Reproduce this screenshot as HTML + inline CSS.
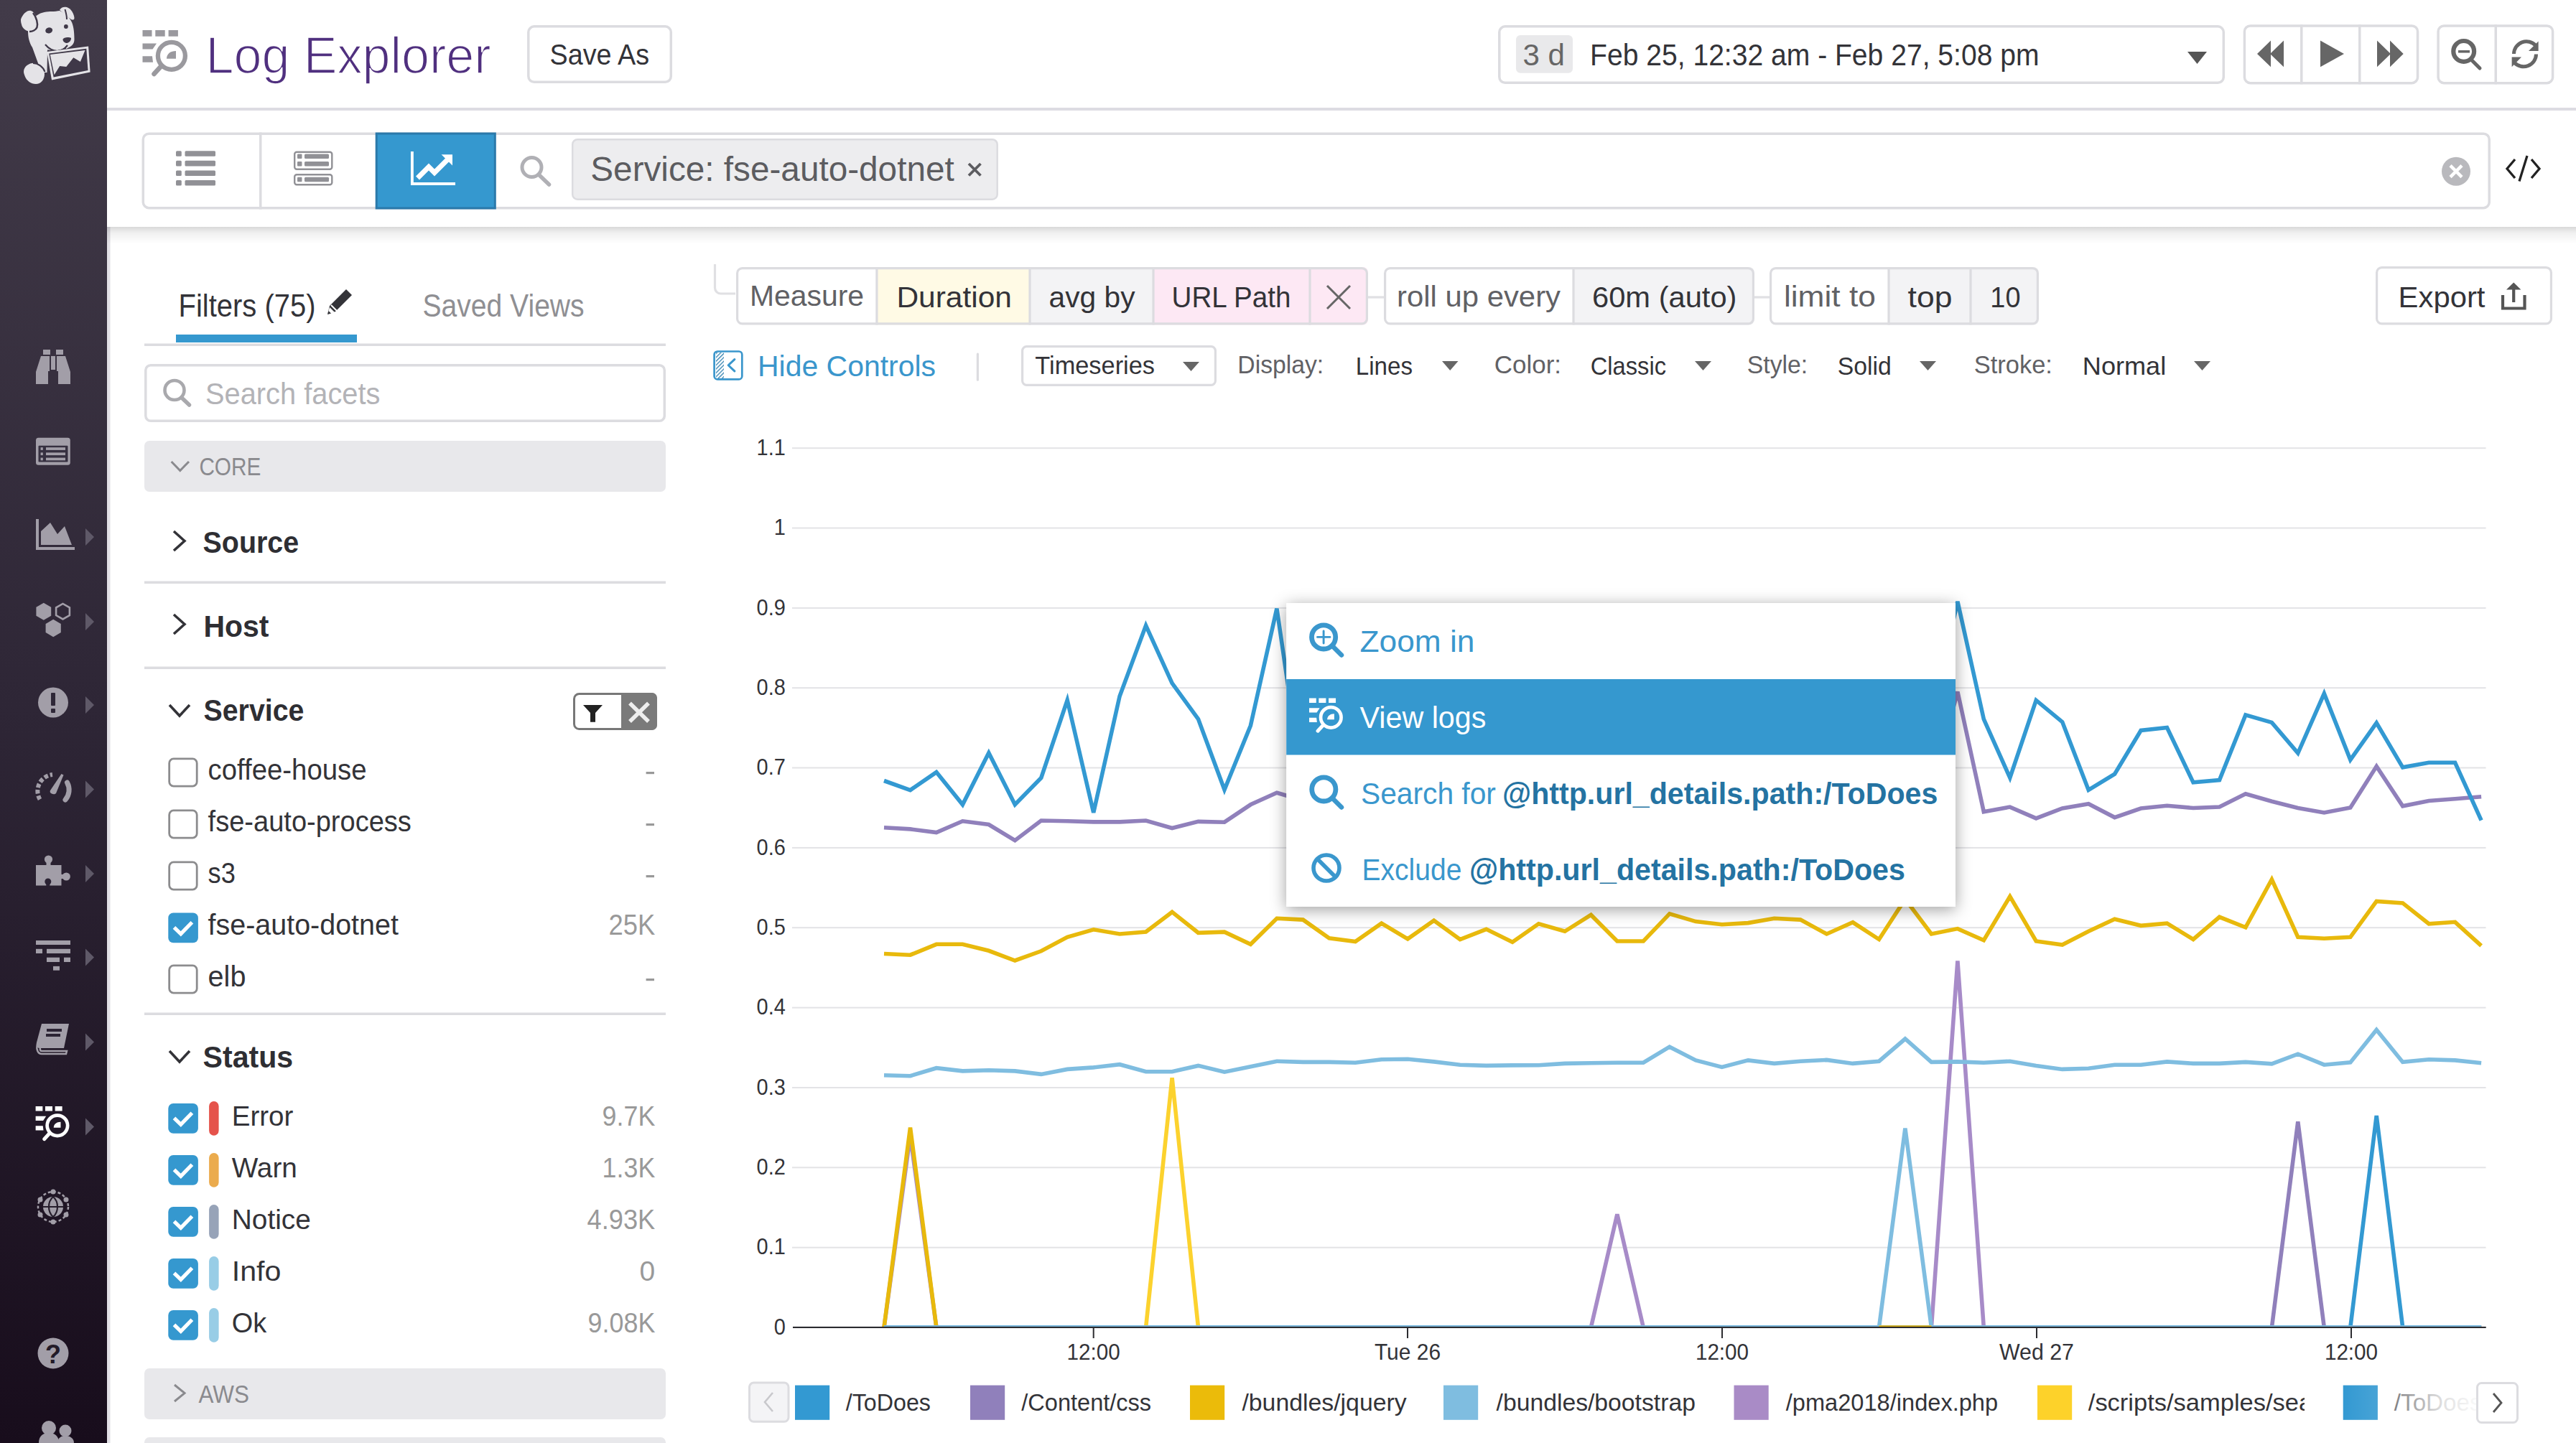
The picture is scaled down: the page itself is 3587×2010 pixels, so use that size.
<!DOCTYPE html><html><head><meta charset="utf-8"><style>html,body{margin:0;padding:0;background:#fff;overflow:hidden;width:3587px;height:2010px}svg{display:block;font-family:"Liberation Sans",sans-serif}</style></head><body>
<svg width="3587" height="2010" viewBox="0 0 3587 2010">
<defs>
<linearGradient id="sb" x1="0" y1="0" x2="0" y2="1"><stop offset="0" stop-color="#423b49"/><stop offset="0.49" stop-color="#2e2636"/><stop offset="1" stop-color="#180d1c"/></linearGradient>
<linearGradient id="tbs" x1="0" y1="0" x2="0" y2="1"><stop offset="0" stop-color="#000" stop-opacity="0.15"/><stop offset="0.35" stop-color="#000" stop-opacity="0.06"/><stop offset="1" stop-color="#000" stop-opacity="0"/></linearGradient>
<linearGradient id="fade" x1="0" y1="0" x2="1" y2="0"><stop offset="0" stop-color="#fff" stop-opacity="0"/><stop offset="0.26" stop-color="#fff" stop-opacity="0.1"/><stop offset="0.4" stop-color="#fff" stop-opacity="0.4"/><stop offset="0.75" stop-color="#fff" stop-opacity="0.85"/><stop offset="1" stop-color="#fff" stop-opacity="0.97"/></linearGradient>
<filter id="shadow" x="-10%" y="-15%" width="120%" height="135%"><feDropShadow dx="0" dy="4" stdDeviation="11" flood-color="#000" flood-opacity="0.38"/></filter>
<pattern id="hatch" width="3.8" height="3.8" patternUnits="userSpaceOnUse" patternTransform="rotate(45)"><rect width="1.3" height="3.8" fill="#2f7fae"/></pattern>
</defs>
<rect width="3587" height="2010" fill="#fff"/>
<rect x="0" y="0" width="149" height="2010" fill="url(#sb)"/>
<rect x="149.0" y="316.0" width="4.5" height="1694.0" rx="0.0" fill="#e2e0e6"/>
<g fill="#e4e3e7">
<path d="M39,44 C38,35 44,25 52,21 C57,17 66,16 72,16 C76,16 80,15.5 83,15 C90,18 97,24 100,31 C103,38 103.5,48 103.5,55 C103.5,61 100,64 96,66 L91.5,68.5 C85,71 75,72 67,71 L66,72 L65.5,101 L54,101 L53,88 C50,80 48,74 45,66 C41,60 39,52 39,44 Z"/>
<path d="M83,14 C85,10 89,9 93,10 C99,12 103,19 103.5,25 C103.5,28 101,28 99,27 C95,24 89,19 83,14 Z"/>
<path d="M29,27 C32,19 38,14 43,15 C48,16 53,26 53,35 C53,41 49,44 44,44 C37,44 31,40 30,34 C29,31 29,29 29,27 Z"/>
<path d="M33,100 C33,92 42,87 49,88 C56,89 62,95 62,103 C62,111 57,117 50,117 C43,117 37,112 35,107 C34,104 33,102 33,100 Z"/>
</g>
<path d="M46,18 C51,24 53,33 51.5,38 C50,42 45,44 41,44" fill="none" stroke="#3f3848" stroke-width="2.5"/>
<path d="M90.5,13 C92,18 93,23 93,27" fill="none" stroke="#3f3848" stroke-width="2.0"/>
<path d="M46,88 C53,88 60,93 62.5,100" fill="none" stroke="#3f3848" stroke-width="2.2"/>
<g fill="#3f3848">
<ellipse cx="68.2" cy="42.4" rx="5" ry="4.1" transform="rotate(-15 68.2 42.4)"/>
<ellipse cx="91.9" cy="37" rx="2.9" ry="2.9"/>
<path d="M87.5,55 C88,52 96,51 99,53 C99.5,56 96,60 93,60 C90,60 87.5,57.5 87.5,55 Z"/>
</g>
<path d="M63,62 C68,68 74,71 80,71 C86,71 91,67 94,63" fill="none" stroke="#3f3848" stroke-width="2.2"/>
<path d="M66,70.8 C75,72.5 84,72 92,67.5" fill="none" stroke="#3f3848" stroke-width="3.0"/>
<path d="M65.3,71.9 L123.1,64.4 L125.6,100.6 L72,111.4 Z" fill="#e4e3e7"/>
<path d="M68.2,74.6 L120.3,67.8 L122.5,98 L74.6,107.5 Z" fill="#3f3848"/>
<path d="M69.8,76 L118.5,70 L111.9,86 L102.3,80.2 L92.3,93.1 L83.2,91.9 L75.6,104.2 Z" fill="#e4e3e7"/>
<g fill="#a29ea8">
<path d="M60,487 L70,487 L70,494 L60,494 Z M78,487 L88,487 L88,494 L78,494 Z"/>
<path d="M57,496 L69,496 L69,517 L67,517 L67,535 L50,535 L50,518 Z M71,496 L77,496 L77,515 L71,515 Z M79,496 L91,496 L98,518 L98,535 L81,535 L81,517 L79,517 Z"/>
</g>
<rect x="50.0" y="609.7" width="47.8" height="38.0" rx="3.5" fill="#a29ea8"/>
<rect x="53.5" y="620.7" width="41.0" height="22.9" rx="1.0" fill="#363040"/>
<rect x="56.6" y="623.2" width="3.2" height="3.7" rx="0.0" fill="#a29ea8"/>
<rect x="64.0" y="623.2" width="27.0" height="3.7" rx="0.0" fill="#a29ea8"/>
<rect x="56.6" y="630.4" width="3.2" height="3.7" rx="0.0" fill="#a29ea8"/>
<rect x="64.0" y="630.4" width="27.0" height="3.7" rx="0.0" fill="#a29ea8"/>
<rect x="56.6" y="637.6" width="3.2" height="3.7" rx="0.0" fill="#a29ea8"/>
<rect x="64.0" y="637.6" width="27.0" height="3.7" rx="0.0" fill="#a29ea8"/>
<path d="M50,723 L50,766 L104,766 L104,762 L54,762 L54,723 Z" fill="#a29ea8"/>
<path d="M57,759 L57,740 L70,728 L80,744 L90,733 L100,759 Z" fill="#a29ea8"/>
<path d="M119,736.0 L131,748.0 L119,760.0 Z" fill="#5f5968"/>
<path d="M71.2,857.7 L60.8,863.7 L50.4,857.7 L50.4,845.7 L60.8,839.7 L71.2,845.7 Z" fill="#a29ea8"/>
<path d="M96.9,857.1 L87.5,862.5 L78.1,857.1 L78.1,846.3 L87.5,840.9 L96.9,846.3 Z" fill="none" stroke="#a29ea8" stroke-width="2.6"/>
<path d="M84.8,881.1 L74.2,887.2 L63.6,881.1 L63.6,868.9 L74.2,862.8 L84.8,868.9 Z" fill="#a29ea8"/>
<path d="M119,854.0 L131,866.0 L119,878.0 Z" fill="#5f5968"/>
<circle cx="74" cy="978.5" r="21" fill="#a29ea8"/>
<rect x="71.0" y="965.0" width="6.0" height="18.0" rx="1.0" fill="#2f2838"/>
<rect x="71.0" y="987.0" width="6.0" height="6.0" rx="1.0" fill="#2f2838"/>
<path d="M119,970.0 L131,982.0 L119,994.0 Z" fill="#5f5968"/>
<path d="M55.5,1113.5 A23,23 0 0 1 73,1079" fill="none" stroke="#a29ea8" stroke-width="6.0" stroke-dasharray="5.5 3"/>
<path d="M93.5,1090 A21,21 0 0 1 91,1114" fill="none" stroke="#a29ea8" stroke-width="7.0" stroke-linecap="round"/>
<path d="M70,1101 L85.5,1078 L88.5,1079.5 L78,1105 C75,1108 68,1105 70,1101 Z" fill="#a29ea8"/>
<path d="M119,1087.5 L131,1099.5 L119,1111.5 Z" fill="#5f5968"/>
<g fill="#a29ea8"><rect x="50" y="1205" width="35.5" height="28.5"/><circle cx="67.5" cy="1197" r="5.6"/><rect x="64.5" y="1199" width="6" height="8"/><circle cx="92.3" cy="1221" r="5.6"/><rect x="84" y="1218" width="6" height="6"/></g>
<circle cx="66.8" cy="1228" r="4.5" fill="#2a2233"/><rect x="64.3" y="1229" width="5" height="5" fill="#2a2233"/>
<path d="M119,1205.0 L131,1217.0 L119,1229.0 Z" fill="#5f5968"/>
<rect x="50.0" y="1310.0" width="48.0" height="6.0" rx="0.0" fill="#a29ea8"/>
<rect x="50.0" y="1321.8" width="9.0" height="6.2" rx="0.0" fill="#a29ea8"/>
<rect x="65.0" y="1321.8" width="33.0" height="6.2" rx="0.0" fill="#a29ea8"/>
<rect x="65.0" y="1333.7" width="18.0" height="6.3" rx="0.0" fill="#a29ea8"/>
<rect x="89.0" y="1333.7" width="9.0" height="6.3" rx="0.0" fill="#a29ea8"/>
<rect x="74.0" y="1345.9" width="9.0" height="5.8" rx="0.0" fill="#a29ea8"/>
<path d="M119,1321.6 L131,1333.6 L119,1345.6 Z" fill="#5f5968"/>
<path d="M58,1426 L96,1426 L89,1460 L55,1460 C51,1460 50,1456 51,1452 Z" fill="#a29ea8"/>
<path d="M52,1455 C50,1462 53,1468 58,1468 L92,1468 L93,1464 L58,1464 C55,1464 55,1458 58,1458" fill="none" stroke="#a29ea8" stroke-width="2.5"/>
<rect x="65.0" y="1433.0" width="21.0" height="4.0" rx="0.0" fill="#2c2434"/>
<rect x="64.0" y="1440.0" width="20.0" height="4.0" rx="0.0" fill="#2c2434"/>
<path d="M119,1439.5 L131,1451.5 L119,1463.5 Z" fill="#5f5968"/>
<g transform="translate(49.6,1541.0) scale(0.750)" fill="#ffffff">
<rect x="0" y="0" width="13" height="8.7"/><rect x="17.8" y="0" width="13.4" height="8.7"/><rect x="36.1" y="0" width="13.3" height="8.7"/>
<path d="M0,18.4 L19.5,18.4 L14,26.6 L0,26.6 Z"/><path d="M0,36.2 L13.5,36.2 L14.5,44.7 L0,44.7 Z"/>
<circle cx="40.4" cy="35.8" r="19" fill="none" stroke="#ffffff" stroke-width="6.3"/>
<line x1="26" y1="50" x2="16" y2="61" stroke="#ffffff" stroke-width="6.5" stroke-linecap="round"/>
<path d="M46.5,29 L46.5,39.8 L33.5,39.8 C33.5,33 39,29 46.5,29 Z"/>
</g>
<path d="M119,1557.5 L131,1569.5 L119,1581.5 Z" fill="#5f5968"/>
<circle cx="74" cy="1681" r="14" fill="#a29ea8"/>
<circle cx="74" cy="1681" r="21" fill="none" stroke="#a29ea8" stroke-width="2.5" stroke-dasharray="4 3"/>
<circle cx="74" cy="1660" r="3.5" fill="#a29ea8"/>
<circle cx="92" cy="1671" r="3.5" fill="#a29ea8"/>
<circle cx="92" cy="1692" r="3.5" fill="#a29ea8"/>
<circle cx="74" cy="1702" r="3.5" fill="#a29ea8"/>
<circle cx="56" cy="1692" r="3.5" fill="#a29ea8"/>
<circle cx="56" cy="1671" r="3.5" fill="#a29ea8"/>
<path d="M60,1681 L88,1681 M74,1667 C66,1674 66,1688 74,1695 M74,1667 C82,1674 82,1688 74,1695" fill="none" stroke="#261e2c" stroke-width="2.2"/>
<circle cx="74" cy="1885" r="21.5" fill="#a29ea8"/>
<text x="74.0" y="1899.0" font-size="36.0" fill="#231b28" font-weight="bold" text-anchor="middle">?</text>
<g fill="#a29ea8"><circle cx="68" cy="1989" r="10"/><path d="M54,2010 C54,2000 60,1996 68,1996 C76,1996 82,2000 82,2010 Z"/><circle cx="91" cy="1993" r="8.5"/><path d="M80,2010 C80,2003 85,2000 91,2000 C97,2000 103,2003 103,2010 Z"/></g>
<rect x="149.0" y="150.0" width="3438.0" height="4.0" rx="0.0" fill="#dddce2"/>
<g transform="translate(198.5,42.0) scale(1.000)" fill="#9a999e">
<rect x="0" y="0" width="13" height="8.7"/><rect x="17.8" y="0" width="13.4" height="8.7"/><rect x="36.1" y="0" width="13.3" height="8.7"/>
<path d="M0,18.4 L19.5,18.4 L14,26.6 L0,26.6 Z"/><path d="M0,36.2 L13.5,36.2 L14.5,44.7 L0,44.7 Z"/>
<circle cx="40.4" cy="35.8" r="19" fill="none" stroke="#9a999e" stroke-width="6.3"/>
<line x1="26" y1="50" x2="16" y2="61" stroke="#9a999e" stroke-width="6.5" stroke-linecap="round"/>
<path d="M46.5,29 L46.5,39.8 L33.5,39.8 C33.5,33 39,29 46.5,29 Z"/>
</g>
<text x="286.5" y="102.0" font-size="72.7" fill="#50307f" textLength="397.1" lengthAdjust="spacingAndGlyphs" stroke="#fff" stroke-width="1.7">Log Explorer</text>
<rect x="735.8" y="36.8" width="198.5" height="77.5" rx="8.0" fill="#fff" stroke="#dcdce0" stroke-width="3.5"/>
<text x="765.6" y="90.0" font-size="40.7" fill="#333338" textLength="138.4" lengthAdjust="spacingAndGlyphs">Save As</text>
<rect x="2087.8" y="36.8" width="1008.5" height="78.5" rx="8.0" fill="#fff" stroke="#dcdce0" stroke-width="3.5"/>
<rect x="2111.0" y="49.0" width="79.0" height="52.7" rx="6.0" fill="#e9e9eb"/>
<text x="2120.5" y="91.2" font-size="43.0" fill="#666" textLength="58.5" lengthAdjust="spacingAndGlyphs">3 d</text>
<text x="2214.1" y="91.2" font-size="43.0" fill="#333338" textLength="625.4" lengthAdjust="spacingAndGlyphs">Feb 25, 12:32 am - Feb 27, 5:08 pm</text>
<path d="M3046,72 L3073,72 L3059.5,89 Z" fill="#555"/>
<rect x="3125.4" y="36.0" width="241.1" height="79.7" rx="8.0" fill="#fff" stroke="#dcdce0" stroke-width="3.5"/>
<rect x="3203.0" y="34.2" width="3.5" height="83.2" rx="0.0" fill="#dcdce0"/>
<rect x="3284.0" y="34.2" width="3.5" height="83.2" rx="0.0" fill="#dcdce0"/>
<path d="M3143,75 L3162,56.4 L3162,93.2 Z M3161,75 L3180,56.4 L3180,93.2 Z" fill="#666"/>
<path d="M3231,56.4 L3264,75 L3231,93.2 Z" fill="#666"/>
<path d="M3310,56.4 L3329,75 L3310,93.2 Z M3328,56.4 L3346.7,75 L3328,93.2 Z" fill="#666"/>
<rect x="3395.1" y="36.0" width="159.5" height="79.7" rx="8.0" fill="#fff" stroke="#dcdce0" stroke-width="3.5"/>
<rect x="3473.5" y="34.2" width="3.5" height="83.2" rx="0.0" fill="#dcdce0"/>
<circle cx="3430.7" cy="71.4" r="14.4" fill="none" stroke="#666" stroke-width="6.2"/>
<line x1="3423.0" y1="71.8" x2="3439.0" y2="71.8" stroke="#666" stroke-width="3.5" stroke-linecap="butt"/>
<line x1="3442.0" y1="84.0" x2="3453.0" y2="95.0" stroke="#666" stroke-width="5.0" stroke-linecap="round"/>
<path d="M3500.5,75 A17.5,17.5 0 0 1 3531,63.5 M3531.5,75.5 A17.5,17.5 0 0 1 3501,87" fill="none" stroke="#666" stroke-width="5.0"/>
<path d="M3534.6,57.4 L3534.6,71 L3521,71 Z" fill="#666"/>
<path d="M3497.6,93.2 L3497.6,79.5 L3511,79.5 Z" fill="#666"/>
<rect x="149" y="316" width="3438" height="24" fill="url(#tbs)"/>
<rect x="199.3" y="186.2" width="3266.9" height="103.5" rx="8.0" fill="#fff" stroke="#dcdce0" stroke-width="3.5"/>
<rect x="361.0" y="184.5" width="3.5" height="107.0" rx="0.0" fill="#dcdce0"/>
<rect x="524.2" y="186.0" width="165.1" height="104.0" rx="0.0" fill="#3598cf" stroke="#2b79aa" stroke-width="3.0"/>
<rect x="245.0" y="210.2" width="7.8" height="7.6" rx="1.5" fill="#919196"/>
<rect x="257.5" y="210.2" width="42.5" height="7.6" rx="1.5" fill="#919196"/>
<rect x="245.0" y="223.8" width="7.8" height="7.6" rx="1.5" fill="#919196"/>
<rect x="257.5" y="223.8" width="42.5" height="7.6" rx="1.5" fill="#919196"/>
<rect x="245.0" y="237.4" width="7.8" height="7.6" rx="1.5" fill="#919196"/>
<rect x="257.5" y="237.4" width="42.5" height="7.6" rx="1.5" fill="#919196"/>
<rect x="245.0" y="251.0" width="7.8" height="7.6" rx="1.5" fill="#919196"/>
<rect x="257.5" y="251.0" width="42.5" height="7.6" rx="1.5" fill="#919196"/>
<rect x="410.2" y="211.7" width="52.1" height="24.1" rx="3.0" fill="none" stroke="#919196" stroke-width="2.4"/>
<rect x="410.2" y="243.2" width="52.1" height="14.0" rx="3.0" fill="none" stroke="#919196" stroke-width="2.4"/>
<rect x="414.0" y="214.5" width="6.5" height="6.5" rx="1.0" fill="#919196"/>
<rect x="424.0" y="214.5" width="34.0" height="6.5" rx="1.5" fill="#919196"/>
<rect x="414.0" y="225.0" width="6.5" height="6.5" rx="1.0" fill="#919196"/>
<rect x="424.0" y="225.0" width="34.0" height="6.5" rx="1.5" fill="#919196"/>
<rect x="414.0" y="246.8" width="6.5" height="6.5" rx="1.0" fill="#919196"/>
<rect x="424.0" y="246.8" width="34.0" height="6.5" rx="1.5" fill="#919196"/>
<path d="M573.9,211 L573.9,256 L634,256" fill="none" stroke="#fff" stroke-width="3.9"/>
<path d="M581.5,248 L597,232.5 L605,240.5 L625,220.5" fill="none" stroke="#fff" stroke-width="7.0"/>
<path d="M614.6,215.2 L630,215.2 L630,230.5 Z" fill="#fff"/>
<circle cx="740.5" cy="233" r="13.5" fill="none" stroke="#b0b0b5" stroke-width="5"/>
<line x1="751.0" y1="244.0" x2="764.5" y2="257.0" stroke="#b0b0b5" stroke-width="5.5" stroke-linecap="round"/>
<rect x="797.2" y="194.2" width="591.5" height="83.5" rx="7.0" fill="#ededef" stroke="#dcdce0" stroke-width="2.5"/>
<text x="822.3" y="252.0" font-size="48.0" fill="#5c5c60" textLength="506.4" lengthAdjust="spacingAndGlyphs">Service: fse-auto-dotnet</text>
<path d="M1349,228 L1365.5,244.5 M1365.5,228 L1349,244.5" fill="none" stroke="#5c5c60" stroke-width="3.8"/>
<circle cx="3420" cy="238.7" r="20" fill="#b9b9bd"/>
<path d="M3412,230.7 L3428,246.7 M3428,230.7 L3412,246.7" fill="none" stroke="#fff" stroke-width="4.5"/>
<path d="M3502,222 L3491,235 L3502,248 M3525,222 L3536,235 L3525,248 M3519,217 L3508,252.6" fill="none" stroke="#222" stroke-width="3.3"/>
<text x="248.5" y="441.0" font-size="43.6" fill="#333338" textLength="191.1" lengthAdjust="spacingAndGlyphs">Filters (75)</text>
<path d="M456,438 L459,426 L482,403 L490,411 L467,434 Z" fill="#333338"/>
<path d="M461,425 L469,433" fill="none" stroke="#fff" stroke-width="2.0"/>
<path d="M456,438 L459,428 L466,435 Z" fill="#fff"/>
<path d="M456,438 L457.5,433 L461,436.5 Z" fill="#333338"/>
<text x="588.5" y="441.0" font-size="43.6" fill="#8f8f93" textLength="225.1" lengthAdjust="spacingAndGlyphs">Saved Views</text>
<rect x="201.0" y="478.5" width="726.0" height="3.5" rx="0.0" fill="#dcdce0"/>
<rect x="245.0" y="466.0" width="252.0" height="11.0" rx="0.0" fill="#3598cf"/>
<rect x="202.8" y="508.8" width="722.5" height="77.5" rx="7.0" fill="#fff" stroke="#dcdce0" stroke-width="3.5"/>
<circle cx="243" cy="543.5" r="13.5" fill="none" stroke="#a9a9ad" stroke-width="4.6"/>
<line x1="253.0" y1="554.0" x2="263.5" y2="564.0" stroke="#a9a9ad" stroke-width="5.5" stroke-linecap="round"/>
<text x="286.0" y="562.6" font-size="43.2" fill="#b3b3b7" textLength="243.5" lengthAdjust="spacingAndGlyphs">Search facets</text>
<rect x="201.0" y="614.0" width="726.0" height="71.0" rx="7.0" fill="#e8e8eb"/>
<path d="M238.7,643 L250.8,655.5 L263,643" fill="none" stroke="#8a8a8e" stroke-width="3.0"/>
<text x="277.4" y="662.3" font-size="35.5" fill="#8a8a8e" textLength="85.9" lengthAdjust="spacingAndGlyphs">CORE</text>
<path d="M242.0,740.0 L257.0,753.5 L242.0,767.0" fill="none" stroke="#333338" stroke-width="3.6"/>
<text x="282.5" y="770.0" font-size="42.2" fill="#2e2e33" font-weight="bold" textLength="133.7" lengthAdjust="spacingAndGlyphs">Source</text>
<rect x="201.0" y="809.5" width="726.0" height="3.5" rx="0.0" fill="#dcdce0"/>
<path d="M242.0,856.0 L257.0,869.5 L242.0,883.0" fill="none" stroke="#333338" stroke-width="3.6"/>
<text x="283.5" y="887.0" font-size="42.2" fill="#2e2e33" font-weight="bold" textLength="91.0" lengthAdjust="spacingAndGlyphs">Host</text>
<rect x="201.0" y="928.5" width="726.0" height="3.5" rx="0.0" fill="#dcdce0"/>
<path d="M236.0,982.0 L250.0,997.0 L264.0,982.0" fill="none" stroke="#333338" stroke-width="3.6"/>
<text x="283.5" y="1004.0" font-size="42.2" fill="#2e2e33" font-weight="bold" textLength="140.0" lengthAdjust="spacingAndGlyphs">Service</text>
<rect x="799.5" y="966.5" width="114.0" height="49.0" rx="7.0" fill="#fff" stroke="#777" stroke-width="3.0"/>
<path d="M865,965 L908,965 A7,7 0 0 1 915,972 L915,1010 A7,7 0 0 1 908,1017 L865,1017 Z" fill="#7a7a7a"/>
<path d="M812,982 L839,982 L829,993 L829,1005.7 L822,1005.7 L822,993 Z" fill="#222"/>
<path d="M877,979.5 L903,1005 M903,979.5 L877,1005" fill="none" stroke="#eee" stroke-width="5.5"/>
<rect x="235.7" y="1056.9" width="38.5" height="38.2" rx="6.0" fill="#fff" stroke="#8c8c8e" stroke-width="2.8"/>
<text x="289.6" y="1086.3" font-size="40.0" fill="#333338" textLength="220.9" lengthAdjust="spacingAndGlyphs">coffee-house</text>
<rect x="899.6" y="1075.0" width="11.4" height="3.2" rx="0.0" fill="#999"/>
<rect x="235.7" y="1128.9" width="38.5" height="38.2" rx="6.0" fill="#fff" stroke="#8c8c8e" stroke-width="2.8"/>
<text x="289.6" y="1158.3" font-size="40.0" fill="#333338" textLength="283.3" lengthAdjust="spacingAndGlyphs">fse-auto-process</text>
<rect x="899.6" y="1147.0" width="11.4" height="3.2" rx="0.0" fill="#999"/>
<rect x="235.7" y="1200.9" width="38.5" height="38.2" rx="6.0" fill="#fff" stroke="#8c8c8e" stroke-width="2.8"/>
<text x="289.6" y="1230.3" font-size="40.0" fill="#333338" textLength="38.3" lengthAdjust="spacingAndGlyphs">s3</text>
<rect x="899.6" y="1219.0" width="11.4" height="3.2" rx="0.0" fill="#999"/>
<rect x="234.3" y="1271.5" width="41.6" height="41.7" rx="7.0" fill="#3598cf"/>
<path d="M242.5,1291.8 L251.8,1300.8 L267.4,1284.8" fill="none" stroke="#fff" stroke-width="5.2"/>
<text x="289.6" y="1302.3" font-size="40.0" fill="#333338" textLength="265.3" lengthAdjust="spacingAndGlyphs">fse-auto-dotnet</text>
<text x="912.4" y="1302.3" font-size="40.0" fill="#999" text-anchor="end" textLength="64.8" lengthAdjust="spacingAndGlyphs">25K</text>
<rect x="235.7" y="1344.9" width="38.5" height="38.2" rx="6.0" fill="#fff" stroke="#8c8c8e" stroke-width="2.8"/>
<text x="289.6" y="1374.3" font-size="40.0" fill="#333338" textLength="52.8" lengthAdjust="spacingAndGlyphs">elb</text>
<rect x="899.6" y="1363.0" width="11.4" height="3.2" rx="0.0" fill="#999"/>
<rect x="201.0" y="1410.5" width="726.0" height="3.5" rx="0.0" fill="#dcdce0"/>
<path d="M236.0,1464.0 L250.0,1479.0 L264.0,1464.0" fill="none" stroke="#333338" stroke-width="3.6"/>
<text x="282.5" y="1487.0" font-size="42.2" fill="#2e2e33" font-weight="bold" textLength="125.7" lengthAdjust="spacingAndGlyphs">Status</text>
<rect x="234.3" y="1537.0" width="41.6" height="41.7" rx="7.0" fill="#3598cf"/>
<path d="M242.5,1557.3 L251.8,1566.3 L267.4,1550.3" fill="none" stroke="#fff" stroke-width="5.2"/>
<rect x="291.1" y="1534.0" width="13.5" height="47.8" rx="6.7" fill="#e5534b"/>
<text x="322.7" y="1568.1" font-size="38.4" fill="#333338" textLength="85.7" lengthAdjust="spacingAndGlyphs">Error</text>
<text x="912.3" y="1568.1" font-size="38.4" fill="#999" text-anchor="end" textLength="73.7" lengthAdjust="spacingAndGlyphs">9.7K</text>
<rect x="234.3" y="1609.0" width="41.6" height="41.7" rx="7.0" fill="#3598cf"/>
<path d="M242.5,1629.3 L251.8,1638.3 L267.4,1622.3" fill="none" stroke="#fff" stroke-width="5.2"/>
<rect x="291.1" y="1606.0" width="13.5" height="47.8" rx="6.7" fill="#ebab4d"/>
<text x="322.7" y="1640.1" font-size="38.4" fill="#333338" textLength="91.2" lengthAdjust="spacingAndGlyphs">Warn</text>
<text x="912.3" y="1640.1" font-size="38.4" fill="#999" text-anchor="end" textLength="73.7" lengthAdjust="spacingAndGlyphs">1.3K</text>
<rect x="234.3" y="1681.0" width="41.6" height="41.7" rx="7.0" fill="#3598cf"/>
<path d="M242.5,1701.3 L251.8,1710.3 L267.4,1694.3" fill="none" stroke="#fff" stroke-width="5.2"/>
<rect x="291.1" y="1678.0" width="13.5" height="47.8" rx="6.7" fill="#97a3b8"/>
<text x="322.7" y="1712.1" font-size="38.4" fill="#333338" textLength="110.2" lengthAdjust="spacingAndGlyphs">Notice</text>
<text x="912.3" y="1712.1" font-size="38.4" fill="#999" text-anchor="end" textLength="94.7" lengthAdjust="spacingAndGlyphs">4.93K</text>
<rect x="234.3" y="1753.0" width="41.6" height="41.7" rx="7.0" fill="#3598cf"/>
<path d="M242.5,1773.3 L251.8,1782.3 L267.4,1766.3" fill="none" stroke="#fff" stroke-width="5.2"/>
<rect x="291.1" y="1750.0" width="13.5" height="47.8" rx="6.7" fill="#98cde6"/>
<text x="322.7" y="1784.1" font-size="38.4" fill="#333338" textLength="68.7" lengthAdjust="spacingAndGlyphs">Info</text>
<text x="912.3" y="1784.1" font-size="38.4" fill="#999" text-anchor="end" textLength="21.7" lengthAdjust="spacingAndGlyphs">0</text>
<rect x="234.3" y="1825.0" width="41.6" height="41.7" rx="7.0" fill="#3598cf"/>
<path d="M242.5,1845.3 L251.8,1854.3 L267.4,1838.3" fill="none" stroke="#fff" stroke-width="5.2"/>
<rect x="291.1" y="1822.0" width="13.5" height="47.8" rx="6.7" fill="#98cde6"/>
<text x="322.7" y="1856.1" font-size="38.4" fill="#333338" textLength="48.4" lengthAdjust="spacingAndGlyphs">Ok</text>
<text x="912.3" y="1856.1" font-size="38.4" fill="#999" text-anchor="end" textLength="93.7" lengthAdjust="spacingAndGlyphs">9.08K</text>
<rect x="201.0" y="1906.0" width="726.0" height="71.0" rx="7.0" fill="#e8e8eb"/>
<path d="M243.0,1929.0 L257.0,1940.5 L243.0,1952.0" fill="none" stroke="#8a8a8e" stroke-width="3.0"/>
<text x="276.5" y="1954.0" font-size="34.9" fill="#8a8a8e" textLength="70.4" lengthAdjust="spacingAndGlyphs">AWS</text>
<rect x="201.0" y="2002.0" width="726.0" height="38.0" rx="7.0" fill="#e8e8eb"/>
<path d="M995.5,368 L995.5,401 A8,8 0 0 0 1003.5,409 L1024,409" fill="none" stroke="#e0e0e3" stroke-width="3.2"/>
<path d="M1032.0,372 L1220.9,372 L1220.9,452.5 L1032.0,452.5 A7,7 0 0 1 1025.0,445.5 L1025.0,379 A7,7 0 0 1 1032.0,372 Z" fill="#fff"/>
<rect x="1220.9" y="372.0" width="213.1" height="80.5" rx="0.0" fill="#fffae5"/>
<rect x="1434.0" y="372.0" width="172.0" height="80.5" rx="0.0" fill="#f3f3f5"/>
<rect x="1606.0" y="372.0" width="218.0" height="80.5" rx="0.0" fill="#fde8f4"/>
<path d="M1824.0,372 L1898.0,372 A7,7 0 0 1 1905.0,379 L1905.0,445.5 A7,7 0 0 1 1898.0,452.5 L1824.0,452.5 Z" fill="#fde8f4"/>
<rect x="1026.6" y="373.6" width="876.8" height="77.3" rx="7.0" fill="none" stroke="#dcdce0" stroke-width="3.2"/>
<rect x="1219.3" y="372.0" width="3.2" height="80.5" rx="0.0" fill="#dcdce0"/>
<rect x="1432.4" y="372.0" width="3.2" height="80.5" rx="0.0" fill="#dcdce0"/>
<rect x="1604.4" y="372.0" width="3.2" height="80.5" rx="0.0" fill="#dcdce0"/>
<rect x="1822.4" y="372.0" width="3.2" height="80.5" rx="0.0" fill="#dcdce0"/>
<text x="1044.0" y="426.2" font-size="41.4" fill="#616165" textLength="159.1" lengthAdjust="spacingAndGlyphs">Measure</text>
<text x="1248.4" y="428.0" font-size="41.4" fill="#333338" textLength="160.6" lengthAdjust="spacingAndGlyphs">Duration</text>
<text x="1460.6" y="428.0" font-size="41.4" fill="#333338" textLength="119.9" lengthAdjust="spacingAndGlyphs">avg by</text>
<text x="1631.6" y="428.0" font-size="41.4" fill="#333338" textLength="165.9" lengthAdjust="spacingAndGlyphs">URL Path</text>
<path d="M1848,398 L1880,430 M1880,398 L1848,430" fill="none" stroke="#666" stroke-width="3.0"/>
<line x1="1905.0" y1="414.0" x2="1927.0" y2="414.0" stroke="#e0e0e3" stroke-width="3.2" stroke-linecap="butt"/>
<path d="M1934.0,372 L2191.0,372 L2191.0,452.5 L1934.0,452.5 A7,7 0 0 1 1927.0,445.5 L1927.0,379 A7,7 0 0 1 1934.0,372 Z" fill="#fff"/>
<path d="M2191.0,372 L2436.0,372 A7,7 0 0 1 2443.0,379 L2443.0,445.5 A7,7 0 0 1 2436.0,452.5 L2191.0,452.5 Z" fill="#f3f3f5"/>
<rect x="1928.6" y="373.6" width="512.8" height="77.3" rx="7.0" fill="none" stroke="#dcdce0" stroke-width="3.2"/>
<rect x="2189.4" y="372.0" width="3.2" height="80.5" rx="0.0" fill="#dcdce0"/>
<text x="1945.1" y="427.0" font-size="41.4" fill="#616165" textLength="227.9" lengthAdjust="spacingAndGlyphs">roll up every</text>
<text x="2217.0" y="428.0" font-size="41.4" fill="#333338" textLength="201.5" lengthAdjust="spacingAndGlyphs">60m (auto)</text>
<line x1="2443.0" y1="414.0" x2="2464.0" y2="414.0" stroke="#e0e0e3" stroke-width="3.2" stroke-linecap="butt"/>
<path d="M2471.0,372 L2630.0,372 L2630.0,452.5 L2471.0,452.5 A7,7 0 0 1 2464.0,445.5 L2464.0,379 A7,7 0 0 1 2471.0,372 Z" fill="#fff"/>
<rect x="2630.0" y="372.0" width="114.0" height="80.5" rx="0.0" fill="#f3f3f5"/>
<path d="M2744.0,372 L2832.0,372 A7,7 0 0 1 2839.0,379 L2839.0,445.5 A7,7 0 0 1 2832.0,452.5 L2744.0,452.5 Z" fill="#f3f3f5"/>
<rect x="2465.6" y="373.6" width="371.8" height="77.3" rx="7.0" fill="none" stroke="#dcdce0" stroke-width="3.2"/>
<rect x="2628.4" y="372.0" width="3.2" height="80.5" rx="0.0" fill="#dcdce0"/>
<rect x="2742.4" y="372.0" width="3.2" height="80.5" rx="0.0" fill="#dcdce0"/>
<text x="2483.9" y="427.0" font-size="41.4" fill="#616165" textLength="128.0" lengthAdjust="spacingAndGlyphs">limit to</text>
<text x="2656.6" y="428.0" font-size="41.4" fill="#333338" textLength="61.9" lengthAdjust="spacingAndGlyphs">top</text>
<text x="2771.3" y="428.0" font-size="41.4" fill="#333338" textLength="42.2" lengthAdjust="spacingAndGlyphs">10</text>
<rect x="3309.6" y="372.6" width="242.8" height="78.3" rx="7.0" fill="#fff" stroke="#dcdce0" stroke-width="3.2"/>
<text x="3339.6" y="428.0" font-size="41.4" fill="#333338" textLength="120.9" lengthAdjust="spacingAndGlyphs">Export</text>
<path d="M3485,411 L3485,429.5 L3515.5,429.5 L3515.5,411" fill="none" stroke="#555" stroke-width="4.2"/>
<line x1="3500.2" y1="421.0" x2="3500.2" y2="400.0" stroke="#555" stroke-width="4.2" stroke-linecap="butt"/>
<path d="M3490,403.5 L3500.2,393.5 L3510.4,403.5 Z" fill="#555"/>
<rect x="994.6" y="489.5" width="38.7" height="38.9" rx="4.5" fill="#fff" stroke="#3a96cc" stroke-width="2.7"/>
<rect x="997.0" y="491.0" width="11.0" height="36.0" rx="0.0" fill="url(#hatch)"/>
<path d="M1022.8,500.6 L1014.2,508.75 L1022.8,516.9" fill="none" stroke="#3a96cc" stroke-width="3.0" stroke-linecap="round" stroke-linejoin="round"/>
<text x="1055.0" y="523.6" font-size="41.4" fill="#3a96cc" textLength="248.1" lengthAdjust="spacingAndGlyphs">Hide Controls</text>
<rect x="1359.8" y="491.4" width="3.2" height="39.3" rx="1.5" fill="#dcdce0"/>
<rect x="1423.6" y="482.6" width="268.8" height="53.8" rx="6.0" fill="#fff" stroke="#dcdce0" stroke-width="3.2"/>
<text x="1441.3" y="521.4" font-size="34.6" fill="#333338" textLength="166.7" lengthAdjust="spacingAndGlyphs">Timeseries</text>
<path d="M1647.0,504.0 L1670.0,504.0 L1658.5,517.0 Z" fill="#666"/>
<text x="1723.3" y="520.0" font-size="34.6" fill="#616165" textLength="119.9" lengthAdjust="spacingAndGlyphs">Display:</text>
<text x="1887.8" y="521.7" font-size="34.6" fill="#333338" textLength="79.2" lengthAdjust="spacingAndGlyphs">Lines</text>
<path d="M2008.0,503.0 L2030.5,503.0 L2019.2,516.0 Z" fill="#666"/>
<text x="2080.8" y="520.0" font-size="34.6" fill="#616165" textLength="93.2" lengthAdjust="spacingAndGlyphs">Color:</text>
<text x="2214.8" y="521.7" font-size="34.6" fill="#333338" textLength="105.2" lengthAdjust="spacingAndGlyphs">Classic</text>
<path d="M2360.0,503.0 L2383.0,503.0 L2371.5,516.0 Z" fill="#666"/>
<text x="2432.8" y="520.0" font-size="34.6" fill="#616165" textLength="84.4" lengthAdjust="spacingAndGlyphs">Style:</text>
<text x="2558.8" y="521.7" font-size="34.6" fill="#333338" textLength="75.0" lengthAdjust="spacingAndGlyphs">Solid</text>
<path d="M2673.0,503.0 L2696.0,503.0 L2684.5,516.0 Z" fill="#666"/>
<text x="2748.8" y="520.0" font-size="34.6" fill="#616165" textLength="109.1" lengthAdjust="spacingAndGlyphs">Stroke:</text>
<text x="2899.8" y="521.7" font-size="34.6" fill="#333338" textLength="116.4" lengthAdjust="spacingAndGlyphs">Normal</text>
<path d="M3055.0,503.0 L3078.0,503.0 L3066.5,516.0 Z" fill="#666"/>
<rect x="1103.0" y="1736.7" width="2358.5" height="2.0" rx="0.0" fill="#e3e3e6"/>
<rect x="1103.0" y="1625.3" width="2358.5" height="2.0" rx="0.0" fill="#e3e3e6"/>
<rect x="1103.0" y="1514.0" width="2358.5" height="2.0" rx="0.0" fill="#e3e3e6"/>
<rect x="1103.0" y="1402.6" width="2358.5" height="2.0" rx="0.0" fill="#e3e3e6"/>
<rect x="1103.0" y="1291.2" width="2358.5" height="2.0" rx="0.0" fill="#e3e3e6"/>
<rect x="1103.0" y="1179.9" width="2358.5" height="2.0" rx="0.0" fill="#e3e3e6"/>
<rect x="1103.0" y="1068.5" width="2358.5" height="2.0" rx="0.0" fill="#e3e3e6"/>
<rect x="1103.0" y="957.2" width="2358.5" height="2.0" rx="0.0" fill="#e3e3e6"/>
<rect x="1103.0" y="845.9" width="2358.5" height="2.0" rx="0.0" fill="#e3e3e6"/>
<rect x="1103.0" y="734.5" width="2358.5" height="2.0" rx="0.0" fill="#e3e3e6"/>
<rect x="1103.0" y="623.2" width="2358.5" height="2.0" rx="0.0" fill="#e3e3e6"/>
<text x="1093.8" y="1858.6" font-size="31.2" fill="#333338" text-anchor="end" textLength="16.1" lengthAdjust="spacingAndGlyphs">0</text>
<text x="1093.8" y="1747.2" font-size="31.2" fill="#333338" text-anchor="end" textLength="40.2" lengthAdjust="spacingAndGlyphs">0.1</text>
<text x="1093.8" y="1635.9" font-size="31.2" fill="#333338" text-anchor="end" textLength="40.2" lengthAdjust="spacingAndGlyphs">0.2</text>
<text x="1093.8" y="1524.5" font-size="31.2" fill="#333338" text-anchor="end" textLength="40.2" lengthAdjust="spacingAndGlyphs">0.3</text>
<text x="1093.8" y="1413.2" font-size="31.2" fill="#333338" text-anchor="end" textLength="40.2" lengthAdjust="spacingAndGlyphs">0.4</text>
<text x="1093.8" y="1301.8" font-size="31.2" fill="#333338" text-anchor="end" textLength="40.2" lengthAdjust="spacingAndGlyphs">0.5</text>
<text x="1093.8" y="1190.5" font-size="31.2" fill="#333338" text-anchor="end" textLength="40.2" lengthAdjust="spacingAndGlyphs">0.6</text>
<text x="1093.8" y="1079.1" font-size="31.2" fill="#333338" text-anchor="end" textLength="40.2" lengthAdjust="spacingAndGlyphs">0.7</text>
<text x="1093.8" y="967.8" font-size="31.2" fill="#333338" text-anchor="end" textLength="40.2" lengthAdjust="spacingAndGlyphs">0.8</text>
<text x="1093.8" y="856.5" font-size="31.2" fill="#333338" text-anchor="end" textLength="40.2" lengthAdjust="spacingAndGlyphs">0.9</text>
<text x="1093.8" y="745.1" font-size="31.2" fill="#333338" text-anchor="end" textLength="16.1" lengthAdjust="spacingAndGlyphs">1</text>
<text x="1093.8" y="633.8" font-size="31.2" fill="#333338" text-anchor="end" textLength="40.2" lengthAdjust="spacingAndGlyphs">1.1</text>
<clipPath id="chclip"><rect x="1100" y="600" width="2400" height="1247.9"/></clipPath>
<g clip-path="url(#chclip)">
<path d="M1231.0,1849.0 L1267.5,1582.0 L1303.9,1849.0 L1340.4,1849.0 L1376.8,1849.0 L1413.3,1849.0 L1449.8,1849.0 L1486.2,1849.0 L1522.7,1849.0 L1559.1,1849.0 L1595.6,1849.0 L1632.1,1849.0 L1668.5,1849.0 L1705.0,1849.0 L1741.4,1849.0 L1777.9,1849.0 L1814.4,1849.0 L1850.8,1849.0 L1887.3,1849.0 L1923.7,1849.0 L1960.2,1849.0 L1996.7,1849.0 L2033.1,1849.0 L2069.6,1849.0 L2106.0,1849.0 L2142.5,1849.0 L2179.0,1849.0 L2215.4,1849.0 L2251.9,1849.0 L2288.3,1849.0 L2324.8,1849.0 L2361.3,1849.0 L2397.7,1849.0 L2434.2,1849.0 L2470.6,1849.0 L2507.1,1849.0 L2543.6,1849.0 L2580.0,1849.0 L2616.5,1849.0 L2652.9,1849.0 L2689.4,1849.0 L2725.9,1849.0 L2762.3,1849.0 L2798.8,1849.0 L2835.2,1849.0 L2871.7,1849.0 L2908.2,1849.0 L2944.6,1849.0 L2981.1,1849.0 L3017.5,1849.0 L3054.0,1849.0 L3090.5,1849.0 L3126.9,1849.0 L3163.4,1849.0 L3199.8,1849.0 L3236.3,1849.0 L3272.8,1849.0 L3309.2,1849.0 L3345.7,1849.0 L3382.1,1849.0 L3418.6,1849.0 L3455.1,1849.0" fill="none" stroke="#a78bc8" stroke-width="5.6" stroke-linejoin="miter" stroke-miterlimit="4" opacity="1.00"/>
<path d="M1231.0,1849.0 L1267.5,1570.7 L1303.9,1849.0 L1340.4,1849.0 L1376.8,1849.0 L1413.3,1849.0 L1449.8,1849.0 L1486.2,1849.0 L1522.7,1849.0 L1559.1,1849.0 L1595.6,1849.0 L1632.1,1849.0 L1668.5,1849.0 L1705.0,1849.0 L1741.4,1849.0 L1777.9,1849.0 L1814.4,1849.0 L1850.8,1849.0 L1887.3,1849.0 L1923.7,1849.0 L1960.2,1849.0 L1996.7,1849.0 L2033.1,1849.0 L2069.6,1849.0 L2106.0,1849.0 L2142.5,1849.0 L2179.0,1849.0 L2215.4,1849.0 L2251.9,1849.0 L2288.3,1849.0 L2324.8,1849.0 L2361.3,1849.0 L2397.7,1849.0 L2434.2,1849.0 L2470.6,1849.0 L2507.1,1849.0 L2543.6,1849.0 L2580.0,1849.0 L2616.5,1849.0 L2652.9,1849.0 L2689.4,1849.0 L2725.9,1849.0 L2762.3,1849.0 L2798.8,1849.0 L2835.2,1849.0 L2871.7,1849.0 L2908.2,1849.0 L2944.6,1849.0 L2981.1,1849.0 L3017.5,1849.0 L3054.0,1849.0 L3090.5,1849.0 L3126.9,1849.0 L3163.4,1849.0 L3199.8,1849.0 L3236.3,1849.0 L3272.8,1849.0 L3309.2,1849.0 L3345.7,1849.0 L3382.1,1849.0 L3418.6,1849.0 L3455.1,1849.0" fill="none" stroke="#e8b90c" stroke-width="5.6" stroke-linejoin="miter" stroke-miterlimit="4" opacity="1.00"/>
<path d="M1231.0,1849.0 L1267.5,1849.0 L1303.9,1849.0 L1340.4,1849.0 L1376.8,1849.0 L1413.3,1849.0 L1449.8,1849.0 L1486.2,1849.0 L1522.7,1849.0 L1559.1,1849.0 L1595.6,1849.0 L1632.1,1501.4 L1668.5,1849.0 L1705.0,1849.0 L1741.4,1849.0 L1777.9,1849.0 L1814.4,1849.0 L1850.8,1849.0 L1887.3,1849.0 L1923.7,1849.0 L1960.2,1849.0 L1996.7,1849.0 L2033.1,1849.0 L2069.6,1849.0 L2106.0,1849.0 L2142.5,1849.0 L2179.0,1849.0 L2215.4,1849.0 L2251.9,1849.0 L2288.3,1849.0 L2324.8,1849.0 L2361.3,1849.0 L2397.7,1849.0 L2434.2,1849.0 L2470.6,1849.0 L2507.1,1849.0 L2543.6,1849.0 L2580.0,1849.0 L2616.5,1849.0 L2652.9,1849.0 L2689.4,1849.0 L2725.9,1849.0 L2762.3,1849.0 L2798.8,1849.0 L2835.2,1849.0 L2871.7,1849.0 L2908.2,1849.0 L2944.6,1849.0 L2981.1,1849.0 L3017.5,1849.0 L3054.0,1849.0 L3090.5,1849.0 L3126.9,1849.0 L3163.4,1849.0 L3199.8,1849.0 L3236.3,1849.0 L3272.8,1849.0 L3309.2,1849.0 L3345.7,1849.0 L3382.1,1849.0 L3418.6,1849.0 L3455.1,1849.0" fill="none" stroke="#fcd22e" stroke-width="5.6" stroke-linejoin="miter" stroke-miterlimit="4" opacity="1.00"/>
<path d="M1231.0,1849.0 L1267.5,1849.0 L1303.9,1849.0 L1340.4,1849.0 L1376.8,1849.0 L1413.3,1849.0 L1449.8,1849.0 L1486.2,1849.0 L1522.7,1849.0 L1559.1,1849.0 L1595.6,1849.0 L1632.1,1849.0 L1668.5,1849.0 L1705.0,1849.0 L1741.4,1849.0 L1777.9,1849.0 L1814.4,1849.0 L1850.8,1849.0 L1887.3,1849.0 L1923.7,1849.0 L1960.2,1849.0 L1996.7,1849.0 L2033.1,1849.0 L2069.6,1849.0 L2106.0,1849.0 L2142.5,1849.0 L2179.0,1849.0 L2215.4,1849.0 L2251.9,1691.3 L2288.3,1849.0 L2324.8,1849.0 L2361.3,1849.0 L2397.7,1849.0 L2434.2,1849.0 L2470.6,1849.0 L2507.1,1849.0 L2543.6,1849.0 L2580.0,1849.0 L2616.5,1849.0 L2652.9,1849.0 L2689.4,1849.0 L2725.9,1338.5 L2762.3,1849.0 L2798.8,1849.0 L2835.2,1849.0 L2871.7,1849.0 L2908.2,1849.0 L2944.6,1849.0 L2981.1,1849.0 L3017.5,1849.0 L3054.0,1849.0 L3090.5,1849.0 L3126.9,1849.0 L3163.4,1849.0 L3199.8,1849.0 L3236.3,1849.0 L3272.8,1849.0 L3309.2,1849.0 L3345.7,1849.0 L3382.1,1849.0 L3418.6,1849.0 L3455.1,1849.0" fill="none" stroke="#a78bc8" stroke-width="5.6" stroke-linejoin="miter" stroke-miterlimit="4" opacity="1.00"/>
<path d="M1231.0,1849.0 L1267.5,1849.0 L1303.9,1849.0 L1340.4,1849.0 L1376.8,1849.0 L1413.3,1849.0 L1449.8,1849.0 L1486.2,1849.0 L1522.7,1849.0 L1559.1,1849.0 L1595.6,1849.0 L1632.1,1849.0 L1668.5,1849.0 L1705.0,1849.0 L1741.4,1849.0 L1777.9,1849.0 L1814.4,1849.0 L1850.8,1849.0 L1887.3,1849.0 L1923.7,1849.0 L1960.2,1849.0 L1996.7,1849.0 L2033.1,1849.0 L2069.6,1849.0 L2106.0,1849.0 L2142.5,1849.0 L2179.0,1849.0 L2215.4,1849.0 L2251.9,1849.0 L2288.3,1849.0 L2324.8,1849.0 L2361.3,1849.0 L2397.7,1849.0 L2434.2,1849.0 L2470.6,1849.0 L2507.1,1849.0 L2543.6,1849.0 L2580.0,1849.0 L2616.5,1849.0 L2652.9,1849.0 L2689.4,1849.0 L2725.9,1849.0 L2762.3,1849.0 L2798.8,1849.0 L2835.2,1849.0 L2871.7,1849.0 L2908.2,1849.0 L2944.6,1849.0 L2981.1,1849.0 L3017.5,1849.0 L3054.0,1849.0 L3090.5,1849.0 L3126.9,1849.0 L3163.4,1849.0 L3199.8,1562.4 L3236.3,1849.0 L3272.8,1849.0 L3309.2,1849.0 L3345.7,1849.0 L3382.1,1849.0 L3418.6,1849.0 L3455.1,1849.0" fill="none" stroke="#9080bb" stroke-width="5.6" stroke-linejoin="miter" stroke-miterlimit="4" opacity="1.00"/>
<path d="M1231.0,1849.0 L1267.5,1849.0 L1303.9,1849.0 L1340.4,1849.0 L1376.8,1849.0 L1413.3,1849.0 L1449.8,1849.0 L1486.2,1849.0 L1522.7,1849.0 L1559.1,1849.0 L1595.6,1849.0 L1632.1,1849.0 L1668.5,1849.0 L1705.0,1849.0 L1741.4,1849.0 L1777.9,1849.0 L1814.4,1849.0 L1850.8,1849.0 L1887.3,1849.0 L1923.7,1849.0 L1960.2,1849.0 L1996.7,1849.0 L2033.1,1849.0 L2069.6,1849.0 L2106.0,1849.0 L2142.5,1849.0 L2179.0,1849.0 L2215.4,1849.0 L2251.9,1849.0 L2288.3,1849.0 L2324.8,1849.0 L2361.3,1849.0 L2397.7,1849.0 L2434.2,1849.0 L2470.6,1849.0 L2507.1,1849.0 L2543.6,1849.0 L2580.0,1849.0 L2616.5,1849.0 L2652.9,1849.0 L2689.4,1849.0 L2725.9,1849.0 L2762.3,1849.0 L2798.8,1849.0 L2835.2,1849.0 L2871.7,1849.0 L2908.2,1849.0 L2944.6,1849.0 L2981.1,1849.0 L3017.5,1849.0 L3054.0,1849.0 L3090.5,1849.0 L3126.9,1849.0 L3163.4,1849.0 L3199.8,1849.0 L3236.3,1849.0 L3272.8,1849.0 L3309.2,1554.0 L3345.7,1849.0 L3382.1,1849.0 L3418.6,1849.0 L3455.1,1849.0" fill="none" stroke="#3399d2" stroke-width="5.6" stroke-linejoin="miter" stroke-miterlimit="4" opacity="1.00"/>
<path d="M1231.0,1849.0 L1267.5,1849.0 L1303.9,1849.0 L1340.4,1849.0 L1376.8,1849.0 L1413.3,1849.0 L1449.8,1849.0 L1486.2,1849.0 L1522.7,1849.0 L1559.1,1849.0 L1595.6,1849.0 L1632.1,1849.0 L1668.5,1849.0 L1705.0,1849.0 L1741.4,1849.0 L1777.9,1849.0 L1814.4,1849.0 L1850.8,1849.0 L1887.3,1849.0 L1923.7,1849.0 L1960.2,1849.0 L1996.7,1849.0 L2033.1,1849.0 L2069.6,1849.0 L2106.0,1849.0 L2142.5,1849.0 L2179.0,1849.0 L2215.4,1849.0 L2251.9,1849.0 L2288.3,1849.0 L2324.8,1849.0 L2361.3,1849.0 L2397.7,1849.0 L2434.2,1849.0 L2470.6,1849.0 L2507.1,1849.0 L2543.6,1849.0 L2580.0,1849.0 L2616.5,1849.0 L2652.9,1571.5 L2689.4,1849.0 L2725.9,1849.0 L2762.3,1849.0 L2798.8,1849.0 L2835.2,1849.0 L2871.7,1849.0 L2908.2,1849.0 L2944.6,1849.0 L2981.1,1849.0 L3017.5,1849.0 L3054.0,1849.0 L3090.5,1849.0 L3126.9,1849.0 L3163.4,1849.0 L3199.8,1849.0 L3236.3,1849.0 L3272.8,1849.0 L3309.2,1849.0 L3345.7,1849.0 L3382.1,1849.0 L3418.6,1849.0 L3455.1,1849.0" fill="none" stroke="#7fbde0" stroke-width="5.6" stroke-linejoin="miter" stroke-miterlimit="4" opacity="1.00"/>
<path d="M2616.5,1849 L2689.4,1849" stroke="#e8b90c" stroke-width="5.6"/>
<path d="M1231.0,1497.7 L1267.5,1498.7 L1303.9,1487.7 L1340.4,1491.9 L1376.8,1490.7 L1413.3,1491.9 L1449.8,1496.4 L1486.2,1489.4 L1522.7,1486.9 L1559.1,1482.7 L1595.6,1492.7 L1632.1,1492.7 L1668.5,1484.4 L1705.0,1493.2 L1741.4,1485.7 L1777.9,1478.2 L1814.4,1479.4 L1850.8,1479.4 L1887.3,1480.2 L1923.7,1475.7 L1960.2,1475.2 L1996.7,1478.9 L2033.1,1483.2 L2069.6,1484.4 L2106.0,1483.9 L2142.5,1483.7 L2179.0,1481.4 L2215.4,1480.7 L2251.9,1480.2 L2288.3,1480.2 L2324.8,1458.2 L2361.3,1476.9 L2397.7,1486.4 L2434.2,1476.9 L2470.6,1481.4 L2507.1,1478.2 L2543.6,1476.4 L2580.0,1481.4 L2616.5,1478.2 L2652.9,1447.0 L2689.4,1479.4 L2725.9,1478.9 L2762.3,1480.2 L2798.8,1478.2 L2835.2,1484.4 L2871.7,1489.4 L2908.2,1488.2 L2944.6,1483.2 L2981.1,1483.2 L3017.5,1478.9 L3054.0,1481.4 L3090.5,1481.4 L3126.9,1479.4 L3163.4,1481.9 L3199.8,1468.2 L3236.3,1483.2 L3272.8,1479.9 L3309.2,1434.5 L3345.7,1479.4 L3382.1,1475.7 L3418.6,1476.9 L3455.1,1480.7" fill="none" stroke="#7fbde0" stroke-width="5.6" stroke-linejoin="miter" stroke-miterlimit="4" opacity="1.00"/>
<path d="M1231.0,1328.5 L1267.5,1330.2 L1303.9,1315.3 L1340.4,1315.3 L1376.8,1324.3 L1413.3,1338.0 L1449.8,1324.8 L1486.2,1305.3 L1522.7,1294.8 L1559.1,1301.0 L1595.6,1298.1 L1632.1,1270.4 L1668.5,1299.3 L1705.0,1298.1 L1741.4,1315.3 L1777.9,1279.3 L1814.4,1281.1 L1850.8,1306.8 L1887.3,1311.5 L1923.7,1286.1 L1960.2,1307.8 L1996.7,1282.3 L2033.1,1308.5 L2069.6,1294.3 L2106.0,1312.3 L2142.5,1286.8 L2179.0,1297.3 L2215.4,1274.4 L2251.9,1311.0 L2288.3,1311.0 L2324.8,1272.9 L2361.3,1283.6 L2397.7,1287.8 L2434.2,1285.6 L2470.6,1279.3 L2507.1,1281.1 L2543.6,1301.0 L2580.0,1284.8 L2616.5,1308.5 L2652.9,1252.4 L2689.4,1301.0 L2725.9,1293.6 L2762.3,1309.8 L2798.8,1248.7 L2835.2,1311.0 L2871.7,1316.0 L2908.2,1297.3 L2944.6,1280.3 L2981.1,1289.3 L3017.5,1286.1 L3054.0,1308.5 L3090.5,1277.3 L3126.9,1291.8 L3163.4,1225.0 L3199.8,1305.3 L3236.3,1307.3 L3272.8,1305.3 L3309.2,1255.4 L3345.7,1257.9 L3382.1,1286.8 L3418.6,1284.3 L3455.1,1317.3" fill="none" stroke="#e8b90c" stroke-width="5.6" stroke-linejoin="miter" stroke-miterlimit="4" opacity="1.00"/>
<path d="M1231.0,1152.7 L1267.5,1154.9 L1303.9,1159.6 L1340.4,1143.8 L1376.8,1148.5 L1413.3,1170.7 L1449.8,1143.0 L1486.2,1143.8 L1522.7,1144.9 L1559.1,1144.9 L1595.6,1143.0 L1632.1,1153.5 L1668.5,1144.4 L1705.0,1145.2 L1741.4,1120.8 L1777.9,1104.2 L1814.4,1115.0 L1850.8,1120.0 L1887.3,1130.0 L1923.7,1118.0 L1960.2,1125.0 L1996.7,1110.0 L2033.1,1122.0 L2069.6,1128.0 L2106.0,1115.0 L2142.5,1120.0 L2179.0,1126.0 L2215.4,1112.0 L2251.9,1124.0 L2288.3,1118.0 L2324.8,1121.0 L2361.3,1127.0 L2397.7,1113.0 L2434.2,1119.0 L2470.6,1125.0 L2507.1,1116.0 L2543.6,1122.0 L2580.0,1118.0 L2616.5,1124.0 L2652.9,1110.0 L2689.4,1100.0 L2725.9,963.5 L2762.3,1130.7 L2798.8,1124.1 L2835.2,1139.9 L2871.7,1126.0 L2908.2,1119.7 L2944.6,1138.6 L2981.1,1126.0 L3017.5,1122.3 L3054.0,1125.5 L3090.5,1124.1 L3126.9,1105.7 L3163.4,1116.2 L3199.8,1125.5 L3236.3,1132.0 L3272.8,1124.9 L3309.2,1067.5 L3345.7,1122.8 L3382.1,1115.5 L3418.6,1112.8 L3455.1,1109.7" fill="none" stroke="#9080bb" stroke-width="5.6" stroke-linejoin="miter" stroke-miterlimit="4" opacity="1.00"/>
<path d="M1231.0,1087.5 L1267.5,1100.6 L1303.9,1075.6 L1340.4,1120.8 L1376.8,1048.7 L1413.3,1120.8 L1449.8,1083.4 L1486.2,975.3 L1522.7,1131.9 L1559.1,969.7 L1595.6,871.3 L1632.1,951.7 L1668.5,1001.6 L1705.0,1100.0 L1741.4,1010.7 L1777.9,847.7 L1814.4,1098.0 L1850.8,1040.0 L1887.3,1070.0 L1923.7,1000.0 L1960.2,960.0 L1996.7,1050.0 L2033.1,1010.0 L2069.6,1080.0 L2106.0,990.0 L2142.5,1030.0 L2179.0,1060.0 L2215.4,1000.0 L2251.9,1075.0 L2288.3,1040.0 L2324.8,985.0 L2361.3,1050.0 L2397.7,1020.0 L2434.2,1070.0 L2470.6,1000.0 L2507.1,1045.0 L2543.6,1060.0 L2580.0,990.0 L2616.5,1030.0 L2652.9,1065.0 L2689.4,1000.0 L2725.9,837.9 L2762.3,1001.7 L2798.8,1083.3 L2835.2,975.4 L2871.7,1005.6 L2908.2,1100.4 L2944.6,1078.1 L2981.1,1017.5 L3017.5,1013.5 L3054.0,1089.9 L3090.5,1086.5 L3126.9,995.9 L3163.4,1006.4 L3199.8,1049.1 L3236.3,966.1 L3272.8,1058.3 L3309.2,1007.0 L3345.7,1068.8 L3382.1,1062.3 L3418.6,1062.3 L3455.1,1142.6" fill="none" stroke="#3399d2" stroke-width="5.6" stroke-linejoin="miter" stroke-miterlimit="4" opacity="1.00"/>
</g>
<rect x="1104.0" y="1847.9" width="2357.7" height="2.1" rx="0.0" fill="#2c2c30"/>
<rect x="1521.7" y="1849.0" width="2.0" height="15.0" rx="0.0" fill="#2c2c30"/>
<rect x="1959.0" y="1849.0" width="2.0" height="15.0" rx="0.0" fill="#2c2c30"/>
<rect x="2397.0" y="1849.0" width="2.0" height="15.0" rx="0.0" fill="#2c2c30"/>
<rect x="2835.0" y="1849.0" width="2.0" height="15.0" rx="0.0" fill="#2c2c30"/>
<rect x="3273.0" y="1849.0" width="2.0" height="15.0" rx="0.0" fill="#2c2c30"/>
<text x="1522.7" y="1893.7" font-size="31.5" fill="#333338" text-anchor="middle" textLength="74.2" lengthAdjust="spacingAndGlyphs">12:00</text>
<text x="1960.0" y="1893.7" font-size="31.5" fill="#333338" text-anchor="middle" textLength="92.2" lengthAdjust="spacingAndGlyphs">Tue 26</text>
<text x="2398.0" y="1893.7" font-size="31.5" fill="#333338" text-anchor="middle" textLength="74.2" lengthAdjust="spacingAndGlyphs">12:00</text>
<text x="2836.0" y="1893.7" font-size="31.5" fill="#333338" text-anchor="middle" textLength="104.0" lengthAdjust="spacingAndGlyphs">Wed 27</text>
<text x="3274.0" y="1893.7" font-size="31.5" fill="#333338" text-anchor="middle" textLength="74.2" lengthAdjust="spacingAndGlyphs">12:00</text>
<rect x="1043.5" y="1926.1" width="54.5" height="54.1" rx="6.0" fill="#f4f4f6" stroke="#dcdce0" stroke-width="3.0"/>
<path d="M1076,1940 L1065,1953 L1076,1966" fill="none" stroke="#c8c8cc" stroke-width="2.6"/>
<clipPath id="lgclip"><rect x="1000" y="1900" width="2209" height="110"/></clipPath>
<rect x="1107.0" y="1929.6" width="48.2" height="48.2" rx="0.0" fill="#3399d2"/>
<text x="1177.8" y="1965.3" font-size="33.4" fill="#333338" textLength="118.1" lengthAdjust="spacingAndGlyphs">/ToDoes</text>
<rect x="1351.0" y="1929.6" width="48.2" height="48.2" rx="0.0" fill="#9080bb"/>
<text x="1422.3" y="1965.3" font-size="33.4" fill="#333338" textLength="180.8" lengthAdjust="spacingAndGlyphs">/Content/css</text>
<rect x="1657.0" y="1929.6" width="48.2" height="48.2" rx="0.0" fill="#ebbb0a"/>
<text x="1729.4" y="1965.3" font-size="33.4" fill="#333338" textLength="229.3" lengthAdjust="spacingAndGlyphs">/bundles/jquery</text>
<rect x="2010.0" y="1929.6" width="48.2" height="48.2" rx="0.0" fill="#7fbde0"/>
<text x="2083.6" y="1965.3" font-size="33.4" fill="#333338" textLength="277.3" lengthAdjust="spacingAndGlyphs">/bundles/bootstrap</text>
<rect x="2414.5" y="1929.6" width="48.2" height="48.2" rx="0.0" fill="#a98bc6"/>
<text x="2486.8" y="1965.3" font-size="33.4" fill="#333338" textLength="295.3" lengthAdjust="spacingAndGlyphs">/pma2018/index.php</text>
<rect x="2837.0" y="1929.6" width="48.2" height="48.2" rx="0.0" fill="#fdd22a"/>
<rect x="3262.7" y="1929.6" width="48.2" height="48.2" rx="0.0" fill="#3399d2"/>
<text x="2907.8" y="1965.3" font-size="33.4" fill="#333338" textLength="360.3" lengthAdjust="spacingAndGlyphs" clip-path="url(#lgclip)">/scripts/samples/search</text>
<clipPath id="lgclip2"><rect x="3300" y="1900" width="148" height="110"/></clipPath>
<text x="3333.8" y="1965.3" font-size="33.4" fill="#333338" textLength="212.3" lengthAdjust="spacingAndGlyphs" clip-path="url(#lgclip2)">/ToDoes/Index</text>
<rect x="3262" y="1915" width="186" height="80" fill="url(#fade)"/>
<rect x="3449.5" y="1926.5" width="56.0" height="55.0" rx="6.0" fill="#fff" stroke="#dcdce0" stroke-width="3.0"/>
<path d="M3472,1941 L3483,1954 L3472,1967" fill="none" stroke="#555" stroke-width="2.8"/>
<rect x="1791.2" y="840" width="931.8" height="423" fill="#fff" filter="url(#shadow)"/>
<rect x="1791.2" y="946.0" width="931.8" height="105.5" rx="0.0" fill="#3598cf"/>
<circle cx="1843.1" cy="887.4" r="16.6" fill="none" stroke="#3a97cd" stroke-width="6.8"/>
<line x1="1857.0" y1="901.5" x2="1868.0" y2="912.5" stroke="#3a97cd" stroke-width="6.5" stroke-linecap="round"/>
<path d="M1834.5,887.4 L1852,887.4 M1843.1,879 L1843.1,896" fill="none" stroke="#3a97cd" stroke-width="2.9" stroke-linecap="round"/>
<text x="1893.5" y="908.0" font-size="41.9" fill="#3a97cd" textLength="159.9" lengthAdjust="spacingAndGlyphs">Zoom in</text>
<g transform="translate(1823.0,972.5) scale(0.750)" fill="#ffffff">
<rect x="0" y="0" width="13" height="8.7"/><rect x="17.8" y="0" width="13.4" height="8.7"/><rect x="36.1" y="0" width="13.3" height="8.7"/>
<path d="M0,18.4 L19.5,18.4 L14,26.6 L0,26.6 Z"/><path d="M0,36.2 L13.5,36.2 L14.5,44.7 L0,44.7 Z"/>
<circle cx="40.4" cy="35.8" r="19" fill="none" stroke="#ffffff" stroke-width="6.3"/>
<line x1="26" y1="50" x2="16" y2="61" stroke="#ffffff" stroke-width="6.5" stroke-linecap="round"/>
<path d="M46.5,29 L46.5,39.8 L33.5,39.8 C33.5,33 39,29 46.5,29 Z"/>
</g>
<text x="1893.5" y="1013.5" font-size="41.9" fill="#ffffff" textLength="175.9" lengthAdjust="spacingAndGlyphs">View logs</text>
<circle cx="1843.3" cy="1099.4" r="16.6" fill="none" stroke="#3a97cd" stroke-width="6.8"/>
<line x1="1857.0" y1="1113.5" x2="1868.0" y2="1124.5" stroke="#3a97cd" stroke-width="6.5" stroke-linecap="round"/>
<text x="1895.0" y="1120.2" font-size="41.9" fill="#3a97cd" textLength="187.9" lengthAdjust="spacingAndGlyphs">Search for</text>
<text x="2092.0" y="1120.2" font-size="41.9" fill="#2473a2" font-weight="bold" textLength="606.4" lengthAdjust="spacingAndGlyphs">@http.url_details.path:/ToDoes</text>
<circle cx="1847" cy="1209" r="18" fill="none" stroke="#3a97cd" stroke-width="5.6"/>
<line x1="1834.5" y1="1196.5" x2="1859.5" y2="1221.5" stroke="#3a97cd" stroke-width="5.6" stroke-linecap="butt"/>
<text x="1896.5" y="1226.0" font-size="41.9" fill="#3a97cd" textLength="138.9" lengthAdjust="spacingAndGlyphs">Exclude</text>
<text x="2046.0" y="1226.0" font-size="41.9" fill="#2473a2" font-weight="bold" textLength="606.9" lengthAdjust="spacingAndGlyphs">@http.url_details.path:/ToDoes</text>
</svg></body></html>
